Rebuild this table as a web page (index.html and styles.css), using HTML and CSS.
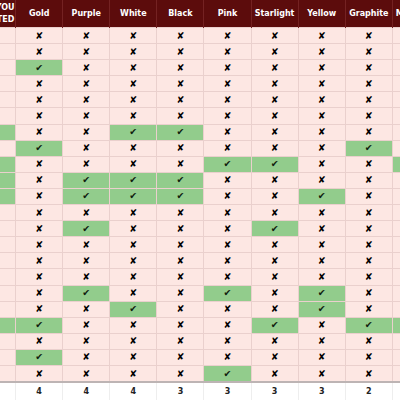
FILE: index.html
```html
<!DOCTYPE html>
<html>

<head>
    <title>Colours</title>
    <link rel="stylesheet" href="styles.css">
</head>

<body>
    <table class="colours">
        <thead>
            <tr>
                <th class="first">HAVE YOU<br>SELECTED</th>
                <th>Gold</th>
                <th>Purple</th>
                <th>White</th>
                <th>Black</th>
                <th>Pink</th>
                <th>Starlight</th>
                <th>Yellow</th>
                <th>Graphite</th>
                <th>Midnight</th>
            </tr>
        </thead>
        <tbody id="rows">
        </tbody>
        <tfoot>
            <tr id="totals"></tr>
        </tfoot>
    </table>

    <script>
        // v = owned, x = not owned (one letter per column)
        var data = [
            'xxxxxxxxxx',
            'xxxxxxxxxx',
            'xvxxxxxxxx',
            'xxxxxxxxxx',
            'xxxxxxxxxx',
            'xxxxxxxxxx',
            'vxxvvxxxxx',
            'xvxxxxxxvx',
            'vxxxxvvxxv',
            'vxvvvxxxxx',
            'vxvvvxxvxx',
            'xxxxxxxxxx',
            'xxvxxxvxxx',
            'xxxxxxxxxx',
            'xxxxxxxxxx',
            'xxxxxxxxxx',
            'xxvxxvxvxx',
            'xxxvxxxvxx',
            'vvxxxxvxvv',
            'xxxxxxxxxx',
            'xvxxxxxxxx',
            'xxxxxvxxxx'
        ];

        var body = document.getElementById('rows');
        var totals = [0, 0, 0, 0, 0, 0, 0, 0, 0, 0];
        var html = '';

        data.forEach(function (row) {
            html += '<tr>';
            for (var i = 0; i < row.length; i++) {
                if (row[i] === 'v') {
                    totals[i]++;
                    html += '<td class="yes">✔</td>';
                } else {
                    html += '<td class="no">✘</td>';
                }
            }
            html += '</tr>';
        });
        body.innerHTML = html;

        var foot = '';
        totals.forEach(function (n) {
            foot += '<td>' + n + '</td>';
        });
        document.getElementById('totals').innerHTML = foot;
    </script>
</body>

</html>
```

FILE: styles.css
```css
body {
    margin: 0;
    background-color: #ffffff;
    font-family: "DejaVu Sans", Verdana, sans-serif;
    overflow: hidden;
}

.colours {
    border-collapse: collapse;
    margin-left: -32px;
}

.colours th,
.colours td {
    width: 46.1px;
    min-width: 46.1px;
    max-width: 46.1px;
    padding: 0;
    text-align: center;
    font-weight: bold;
    font-size: 8px;
}

.colours th.first {
    white-space: nowrap;
}

.colours thead th {
    height: 27px;
    background-color: #5c0c0c;
    color: #ffffff;
    border-right: 1px solid #742222;
    line-height: 12px;
}

.colours tbody td {
    height: 15.1px;
    background-color: #fde7e3;
    color: #000000;
    border: 1px solid #ead0cd;
    font-size: 9.5px;
    line-height: 14px;
}

.colours tbody td.yes {
    background-color: #92cc8c;
    color: #10200e;
}

.colours tfoot td {
    height: 17px;
    background-color: #ffffff;
    color: #222222;
    border-top: 2px solid #bdb4b4;
    border-left: 1px solid #eeeeee;
    border-right: 1px solid #eeeeee;
}
```
